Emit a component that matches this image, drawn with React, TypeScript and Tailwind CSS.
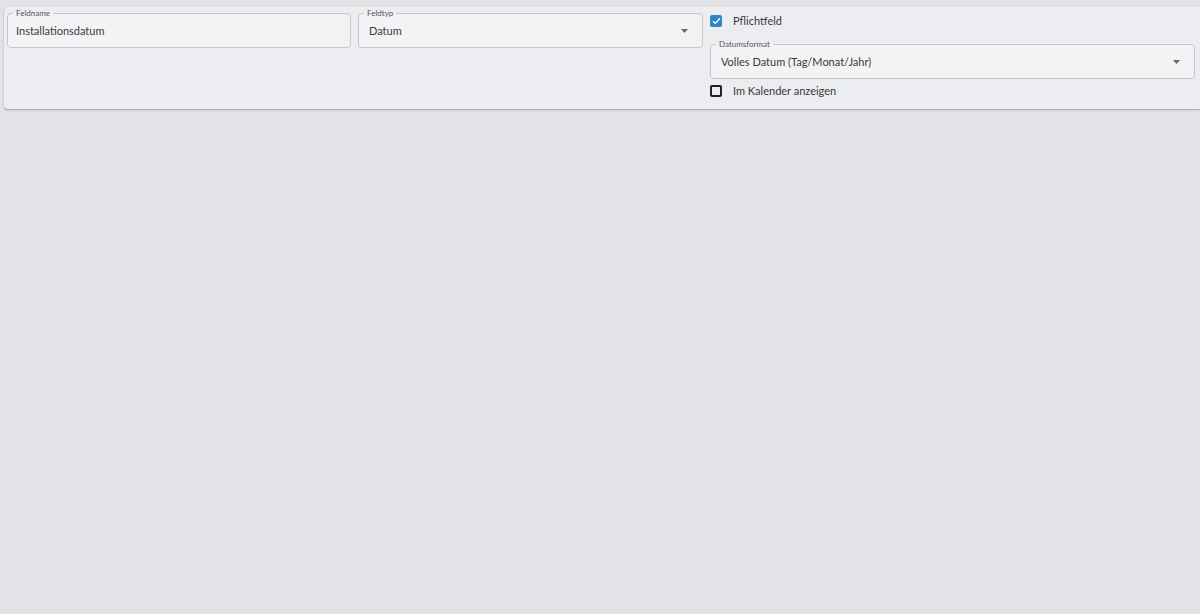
function Field({ label, value, select }: { label: string; value: string; select?: boolean }) {
  return (
    <fieldset className="h-[40px] min-w-0 rounded-[4px] border border-[#c6c6ca] bg-[#f3f2f5] px-[5px]">
      <legend className="px-[3px] text-[8px] leading-[10px] text-[#555]">{label}</legend>
      <div className={`flex h-[24px] items-center pt-[3px] pr-[9px] ${select ? "pl-[5px]" : "pl-[3px]"}`}>
        <span className="flex-1 text-[11px] text-[#3a3a3a]">{value}</span>
        {select && (
          <svg width="7" height="4" viewBox="0 0 7 4" className="mt-[-1px]">
            <path d="M0 0h7L3.5 4z" fill="#6a6a6a" />
          </svg>
        )}
      </div>
    </fieldset>
  );
}

function Check({ checked, label }: { checked?: boolean; label: string }) {
  return (
    <div className="flex h-[12px] items-center">
      {checked ? (
        <div className="flex h-[12px] w-[12px] items-center justify-center rounded-[2px] bg-[#2e86c5]">
          <svg width="9" height="8" viewBox="0 0 9 8">
            <path d="M1 4.2l2.3 2.2L8 1.3" stroke="#fff" strokeWidth="1.3" fill="none" />
          </svg>
        </div>
      ) : (
        <div className="h-[12px] w-[12px] rounded-[2px] border-2 border-[#222]" />
      )}
      <span className="ml-[11px] pt-[1px] text-[11px] text-[#3a3a3a]">{label}</span>
    </div>
  );
}

export default function App() {
  return (
    <div className="min-h-screen bg-[#e2e3e7] pl-[4px] pt-[7px]" style={{ fontFamily: "Lato, 'Noto Sans', sans-serif" }}>
      <div className="flex h-[102px] gap-[7px] rounded-l-[4px] bg-[#ecedf0] pl-[3px] pr-[5px] pt-[1px] shadow-[0_1px_2px_rgba(0,0,0,0.3)]">
        <div className="w-[344px]">
          <Field label="Feldname" value="Installationsdatum" />
        </div>
        <div className="w-[345px]">
          <Field label="Feldtyp" value="Datum" select />
        </div>
        <div className="flex flex-1 flex-col">
          <div className="mt-[7px]">
            <Check checked label="Pflichtfeld" />
          </div>
          <div className="mt-[12px]">
            <Field label="Datumsformat" value="Volles Datum (Tag/Monat/Jahr)" select />
          </div>
          <div className="mt-[6px]">
            <Check label="Im Kalender anzeigen" />
          </div>
        </div>
      </div>
    </div>
  );
}
